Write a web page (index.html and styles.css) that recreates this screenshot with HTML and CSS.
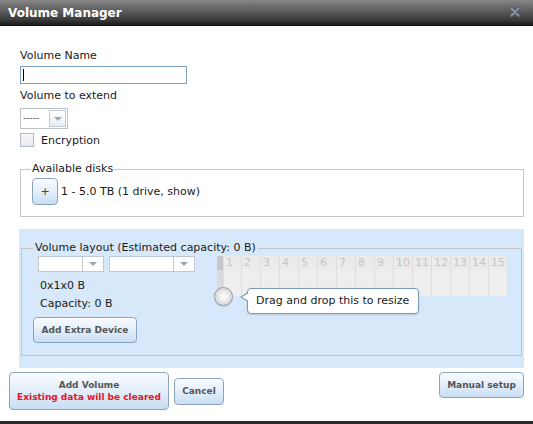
FILE: index.html
```html
<!DOCTYPE html>
<html lang="en">
<head>
    <meta charset="UTF-8">
    <meta name="viewport" content="width=device-width, initial-scale=1.0">
    <link rel="stylesheet" href="styles.css">
    <title>Volume Manager</title>
</head>

<body>
    <div class="dialog">
        <div class="titlebar">
            <span class="title">Volume Manager</span>
            <svg class="close" width="10" height="10" viewBox="0 0 10 10">
                <path d="M1.5 1.5 L8.5 8.5 M8.5 1.5 L1.5 8.5" stroke="#4f5b66" stroke-width="3.4" stroke-linecap="round"/>
                <path d="M1.5 1.5 L8.5 8.5 M8.5 1.5 L1.5 8.5" stroke="#8796a4" stroke-width="1.8" stroke-linecap="round"/>
            </svg>
        </div>

        <div class="content">
            <div class="label first">Volume Name</div>
            <div class="textbox"><span class="caret"></span></div>

            <div class="label">Volume to extend</div>
            <div class="combo small">
                <span class="combo-text">-----</span>
                <span class="combo-arrow"><i></i></span>
            </div>

            <div class="check-row">
                <span class="checkbox"></span>
                <span>Encryption</span>
            </div>

            <fieldset class="group disks">
                <legend>Available disks</legend>
                <div class="disk-row">
                    <button type="button" class="btn plus">+</button>
                    <span>1 - 5.0 TB (1 drive, show)</span>
                </div>
            </fieldset>

            <div class="layout-box">
                <fieldset class="group layout">
                    <legend>Volume layout (Estimated capacity: 0 B)</legend>
                    <div class="layout-row">
                        <div class="layout-left">
                            <div class="combo-pair">
                                <div class="combo thin w1">
                                    <span class="combo-text"></span>
                                    <span class="combo-arrow"><i></i></span>
                                </div>
                                <div class="combo thin w2">
                                    <span class="combo-text"></span>
                                    <span class="combo-arrow"><i></i></span>
                                </div>
                            </div>
                            <div class="info">0x1x0 B</div>
                            <div class="info">Capacity: 0 B</div>
                            <button type="button" class="btn extra">Add Extra Device</button>
                        </div>

                        <div class="disk-grid">
                            <div class="grid-bar"></div>
                            <div class="grid-cells" id="cells"></div>
                            <div class="knob"></div>
                            <div class="tip">Drag and drop this to resize</div>
                        </div>
                    </div>
                </fieldset>
            </div>
        </div>

        <div class="footer">
            <div class="footer-left">
                <button type="button" class="btn add">Add Volume<br><span class="warn">Existing data will be cleared</span></button>
                <button type="button" class="btn cancel">Cancel</button>
            </div>
            <button type="button" class="btn manual">Manual setup</button>
        </div>
        <div class="bottom-edge"></div>
    </div>

    <script>
        const cells = document.getElementById('cells');
        for (let i = 1; i <= 15; i++) {
            const cell = document.createElement('div');
            cell.className = 'cell';
            cell.innerHTML = '<span class="num">' + i + '</span>';
            cells.appendChild(cell);
        }
    </script>
</body>

</html>
```

FILE: styles.css
```css
body {
    margin: 0;
    padding: 0;
    font-family: 'DejaVu Sans', Verdana, sans-serif;
    font-size: 11px;
    color: #1a1a1a;
    background-color: #ffffff;
}

.dialog {
    width: 533px;
    height: 424px;
    display: flex;
    flex-direction: column;
    background-color: #ffffff;
    overflow: hidden;
}

.titlebar {
    height: 26px;
    flex: none;
    display: flex;
    align-items: center;
    justify-content: space-between;
    padding: 0 13px 0 8px;
    background: linear-gradient(#868686, #3a3a3a 80%, #1a1a1a);
    border-bottom: 1px solid #111;
    box-sizing: border-box;
}

.title {
    color: #ffffff;
    font-weight: bold;
    font-size: 12px;
}

.close {
    margin-top: -1px;
}

.content {
    flex: 1;
    padding: 23px 9px 0 20px;
}

.label {
    line-height: 14px;
    margin-top: 5px;
}

.label.first {
    margin-top: 0;
}

.textbox {
    width: 167px;
    height: 18px;
    margin-top: 3px;
    border: 1px solid #7fa2c4;
    box-sizing: border-box;
    padding: 2px 2px;
}

.caret {
    display: block;
    width: 1px;
    height: 12px;
    background-color: #000;
}

.combo {
    display: flex;
    border: 1px solid #bcc2c8;
    box-sizing: border-box;
    background-color: #ffffff;
}

.combo.small {
    width: 48px;
    height: 21px;
    margin-top: 5px;
}

.combo-text {
    flex: 1;
    font-size: 9px;
    color: #444;
    line-height: 19px;
    padding-left: 2px;
}

.combo-arrow {
    width: 17px;
    margin: 1px;
    border: 1px solid #c6ccd2;
    box-sizing: border-box;
    background: linear-gradient(#ffffff, #e9edf1);
    display: flex;
    align-items: center;
    justify-content: center;
}

.combo-arrow i {
    width: 0;
    height: 0;
    border-left: 4px solid transparent;
    border-right: 4px solid transparent;
    border-top: 4px solid #98a8ba;
}

.check-row {
    display: flex;
    align-items: center;
    gap: 7px;
    margin-top: 4px;
    height: 14px;
}

.checkbox {
    width: 14px;
    height: 14px;
    box-sizing: border-box;
    border: 1px solid #b3bcc6;
    background: linear-gradient(#f6f8fa, #e6ebf0);
}

.group {
    margin: 0;
    border: 1px solid #c4c4c4;
    padding: 0 10px;
}

.group legend {
    padding: 0 1px;
    line-height: 14px;
}

.disks {
    margin-top: 15px;
    width: 504px;
    box-sizing: border-box;
    padding-bottom: 11px;
}

.disk-row {
    display: flex;
    align-items: center;
    gap: 3px;
    margin-top: 2px;
    margin-left: 1px;
}

.btn {
    font-family: 'DejaVu Sans', Verdana, sans-serif;
    font-size: 9px;
    font-weight: bold;
    color: #555;
    border: 1px solid #8aa4bf;
    border-radius: 4px;
    background: linear-gradient(#f8fbfe, #e3eefa 50%, #c9ddf2);
    box-shadow: inset 0 1px 0 #ffffff;
    padding: 0;
    cursor: pointer;
}

.plus {
    width: 26px;
    height: 27px;
    font-weight: normal;
    font-size: 11px;
    color: #444;
}

.layout-box {
    margin: 12px 0 0 -1px;
    width: 505px;
    background-color: #d6e8f9;
    padding: 12px 2px 12px 2px;
    box-sizing: border-box;
}

.layout {
    padding: 0 11px 12px 11px;
}

.layout legend {
    padding: 0 2px;
}

.layout-row {
    display: flex;
    margin-top: 1px;
}

.layout-left {
    width: 184px;
}

.combo-pair {
    display: flex;
    gap: 5px;
    margin-left: 5px;
}

.combo.thin {
    height: 16px;
    border-color: #c0c8d0;
}

.combo.thin .combo-arrow {
    width: 21px;
    margin: 0;
    border-width: 0 0 0 1px;
    background: #ffffff;
}

.combo.w1 {
    width: 66px;
}

.combo.w2 {
    width: 86px;
}

.info {
    margin-left: 7px;
    line-height: 14px;
    margin-top: 7px;
}

.info + .info {
    margin-top: 4px;
}

.extra {
    display: block;
    width: 104px;
    height: 26px;
    margin-top: 6px;
}

.disk-grid {
    position: relative;
    display: flex;
    height: 40px;
    margin-left: 0;
}

.grid-bar {
    width: 6px;
    height: 40px;
    background: linear-gradient(#c7c7c7 0, #c7c7c7 14px, #dadada 14px);
}

.grid-cells {
    display: flex;
    background-color: #eeeeee;
}

.cell {
    width: 19px;
    height: 40px;
    box-sizing: border-box;
    border-right: 1px solid #dedede;
    background: linear-gradient(#ebebeb 0, #ebebeb 14px, #eeeeee 14px);
}

.cell:first-child {
    border-left: 1px solid #dedede;
}

.num {
    display: block;
    padding-left: 2px;
    color: #c4c4c4;
    font-size: 11px;
    line-height: 14px;
}

.knob {
    position: absolute;
    left: -3px;
    top: 31px;
    width: 19px;
    height: 19px;
    box-sizing: border-box;
    border-radius: 50%;
    border: 1px solid #9a9a9a;
    background: radial-gradient(circle at 50% 50%, #ffffff 0, #e9e9e9 45%, #c9c9c9 100%);
    box-shadow: 0 1px 1px rgba(0, 0, 0, 0.15);
}

.tip {
    position: absolute;
    left: 30px;
    top: 32px;
    width: 172px;
    height: 26px;
    box-sizing: border-box;
    padding-left: 8px;
    line-height: 24px;
    white-space: nowrap;
    background-color: #ffffff;
    border: 1px solid #7a9ac0;
    border-radius: 4px;
    box-shadow: 0 1px 2px rgba(0, 0, 0, 0.15);
}

.tip::before {
    content: '';
    position: absolute;
    left: -8px;
    top: 3px;
    border-top: 5px solid transparent;
    border-bottom: 5px solid transparent;
    border-right: 8px solid #7a9ac0;
}

.tip::after {
    content: '';
    position: absolute;
    left: -6px;
    top: 4px;
    border-top: 4px solid transparent;
    border-bottom: 4px solid transparent;
    border-right: 7px solid #ffffff;
}

.footer {
    display: flex;
    justify-content: space-between;
    align-items: flex-start;
    padding: 4px 9px 0 9px;
    height: 50px;
}

.footer-left {
    display: flex;
    align-items: center;
    gap: 5px;
}

.add {
    width: 160px;
    height: 38px;
    line-height: 12px;
}

.warn {
    color: #ee1122;
}

.cancel {
    width: 50px;
    height: 27px;
}

.manual {
    width: 85px;
    height: 26px;
}

.bottom-edge {
    height: 3px;
    margin-top: auto;
    background-color: #2a2a2a;
}
```
